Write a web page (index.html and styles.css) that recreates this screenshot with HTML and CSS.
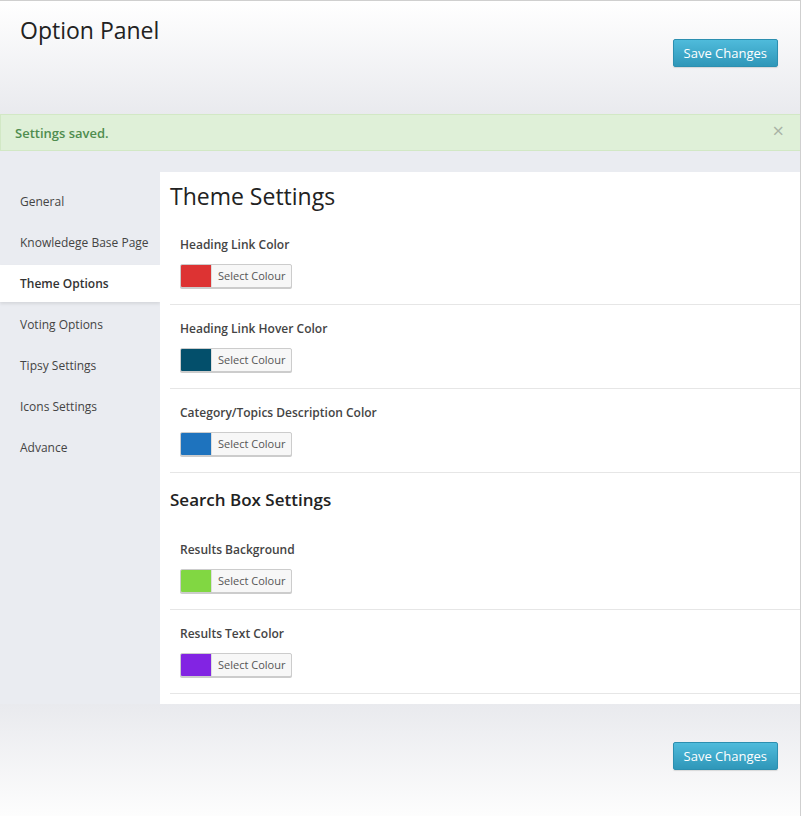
FILE: index.html
```html
<!DOCTYPE html>
<html>
<head>
<meta charset="utf-8">
<link rel="stylesheet" href="styles.css">
</head>
<body>
<div class="wrap">
  <div class="header">
    <h1 class="title">Option Panel</h1>
    <button class="btn">Save Changes</button>
  </div>
  <div class="notice">
    <span class="notice-text">Settings saved.</span>
    <span class="notice-close">×</span>
  </div>
  <div class="body">
    <ul class="nav">
      <li class="nav-item">General</li>
      <li class="nav-item">Knowledege Base Page</li>
      <li class="nav-item active">Theme Options</li>
      <li class="nav-item">Voting Options</li>
      <li class="nav-item">Tipsy Settings</li>
      <li class="nav-item">Icons Settings</li>
      <li class="nav-item">Advance</li>
    </ul>
    <div class="panel">
      <h2 class="panel-title">Theme Settings</h2>
      <div class="field">
        <div class="label">Heading Link Color</div>
        <div class="picker"><span class="swatch" style="background:#dd3333"></span><span class="picker-text">Select Colour</span></div>
      </div>
      <div class="field">
        <div class="label">Heading Link Hover Color</div>
        <div class="picker"><span class="swatch" style="background:#034f6b"></span><span class="picker-text">Select Colour</span></div>
      </div>
      <div class="field">
        <div class="label">Category/Topics Description Color</div>
        <div class="picker"><span class="swatch" style="background:#1e73be"></span><span class="picker-text">Select Colour</span></div>
      </div>
      <h3 class="section-title">Search Box Settings</h3>
      <div class="field">
        <div class="label">Results Background</div>
        <div class="picker"><span class="swatch" style="background:#81d742"></span><span class="picker-text">Select Colour</span></div>
      </div>
      <div class="field">
        <div class="label">Results Text Color</div>
        <div class="picker"><span class="swatch" style="background:#8224e3"></span><span class="picker-text">Select Colour</span></div>
      </div>
    </div>
  </div>
  <div class="footer">
    <button class="btn">Save Changes</button>
  </div>
</div>
</body>
</html>
```

FILE: styles.css
```css
* { box-sizing: border-box; }
html, body { margin: 0; padding: 0; background: #fff; }
body { font-family: "Open Sans", "Noto Sans", sans-serif; color: #333; }

.wrap {
  width: 801px;
  border-top: 1px solid #cfcfcf;
  border-right: 1px solid #cfcfcf;
  background: #eaecf1;
}

.header {
  height: 113px;
  display: flex;
  justify-content: space-between;
  align-items: flex-start;
  padding: 0 22px 0 20px;
  background: linear-gradient(to bottom, #ffffff 0%, #e9eaee 100%);
}
.title {
  margin: 13px 0 0;
  font-size: 23px;
  font-weight: 400;
  line-height: 32px;
  color: #222;
}
.btn {
  margin-top: 38px;
  height: 28px;
  padding: 0 10px;
  font-family: "Open Sans", "Noto Sans", sans-serif;
  font-size: 13px;
  color: #fff;
  background: linear-gradient(to bottom, #4fbbdb 0%, #2f97b9 100%);
  border: 1px solid #2c8fb0;
  border-radius: 2px;
  box-shadow: 0 1px 1px rgba(0,0,0,0.12);
  cursor: pointer;
}

.notice {
  height: 37px;
  display: flex;
  align-items: center;
  justify-content: space-between;
  padding: 0 15px 0 14px;
  background: #dff0d8;
  border: 1px solid #d2e8c5;
  border-right: 0;
}
.notice-text {
  font-size: 13px;
  font-weight: 600;
  color: #4f8d4f;
}
.notice-close {
  font-size: 20px;
  line-height: 1;
  color: #a9b3a5;
  margin-right: 1px;
  margin-top: -3px;
}

.body {
  display: flex;
  align-items: stretch;
}
.nav {
  list-style: none;
  margin: 0;
  padding: 32px 0 0;
  width: 160px;
  flex: none;
  display: flex;
  flex-direction: column;
  gap: 4px;
}
.nav-item {
  height: 37px;
  line-height: 37px;
  padding: 0 20px;
  font-size: 12px;
  color: #444;
  white-space: nowrap;
}
.nav-item.active {
  background: #fff;
  font-weight: 600;
  color: #333;
  box-shadow: 0 2px 3px rgba(0,0,0,0.09);
}

.panel {
  flex: 1;
  margin-top: 21px;
  background: #fff;
  padding: 0 0 10px 10px;
}
.panel-title {
  margin: 9px 0 10px;
  font-size: 23px;
  line-height: 30px;
  font-weight: 400;
  color: #222;
}
.section-title {
  margin: 16px 0 15px;
  font-size: 17px;
  line-height: 22px;
  font-weight: 600;
  color: #222;
}
.field {
  padding: 15px 10px 16px;
  border-bottom: 1px solid #e6e6e6;
}
.label {
  font-size: 12px;
  line-height: 18px;
  font-weight: 600;
  color: #444;
  margin-bottom: 10px;
}
.picker {
  display: flex;
  width: fit-content;
  height: 24px;
  border: 1px solid #ccc;
  border-radius: 2px;
  overflow: hidden;
  background: #f7f7f7;
  box-shadow: 0 1px 0 #ccc;
}
.swatch {
  width: 30px;
  flex: none;
}
.picker-text {
  padding: 0 6px;
  font-size: 11px;
  line-height: 22px;
  color: #555;
  border-left: 1px solid #ddd;
}

.footer {
  height: 112px;
  display: flex;
  justify-content: flex-end;
  padding: 0 22px;
  background: linear-gradient(to bottom, #e9eaee 0%, #fdfdfd 100%);
}
.footer .btn { margin-top: 38px; }
```
